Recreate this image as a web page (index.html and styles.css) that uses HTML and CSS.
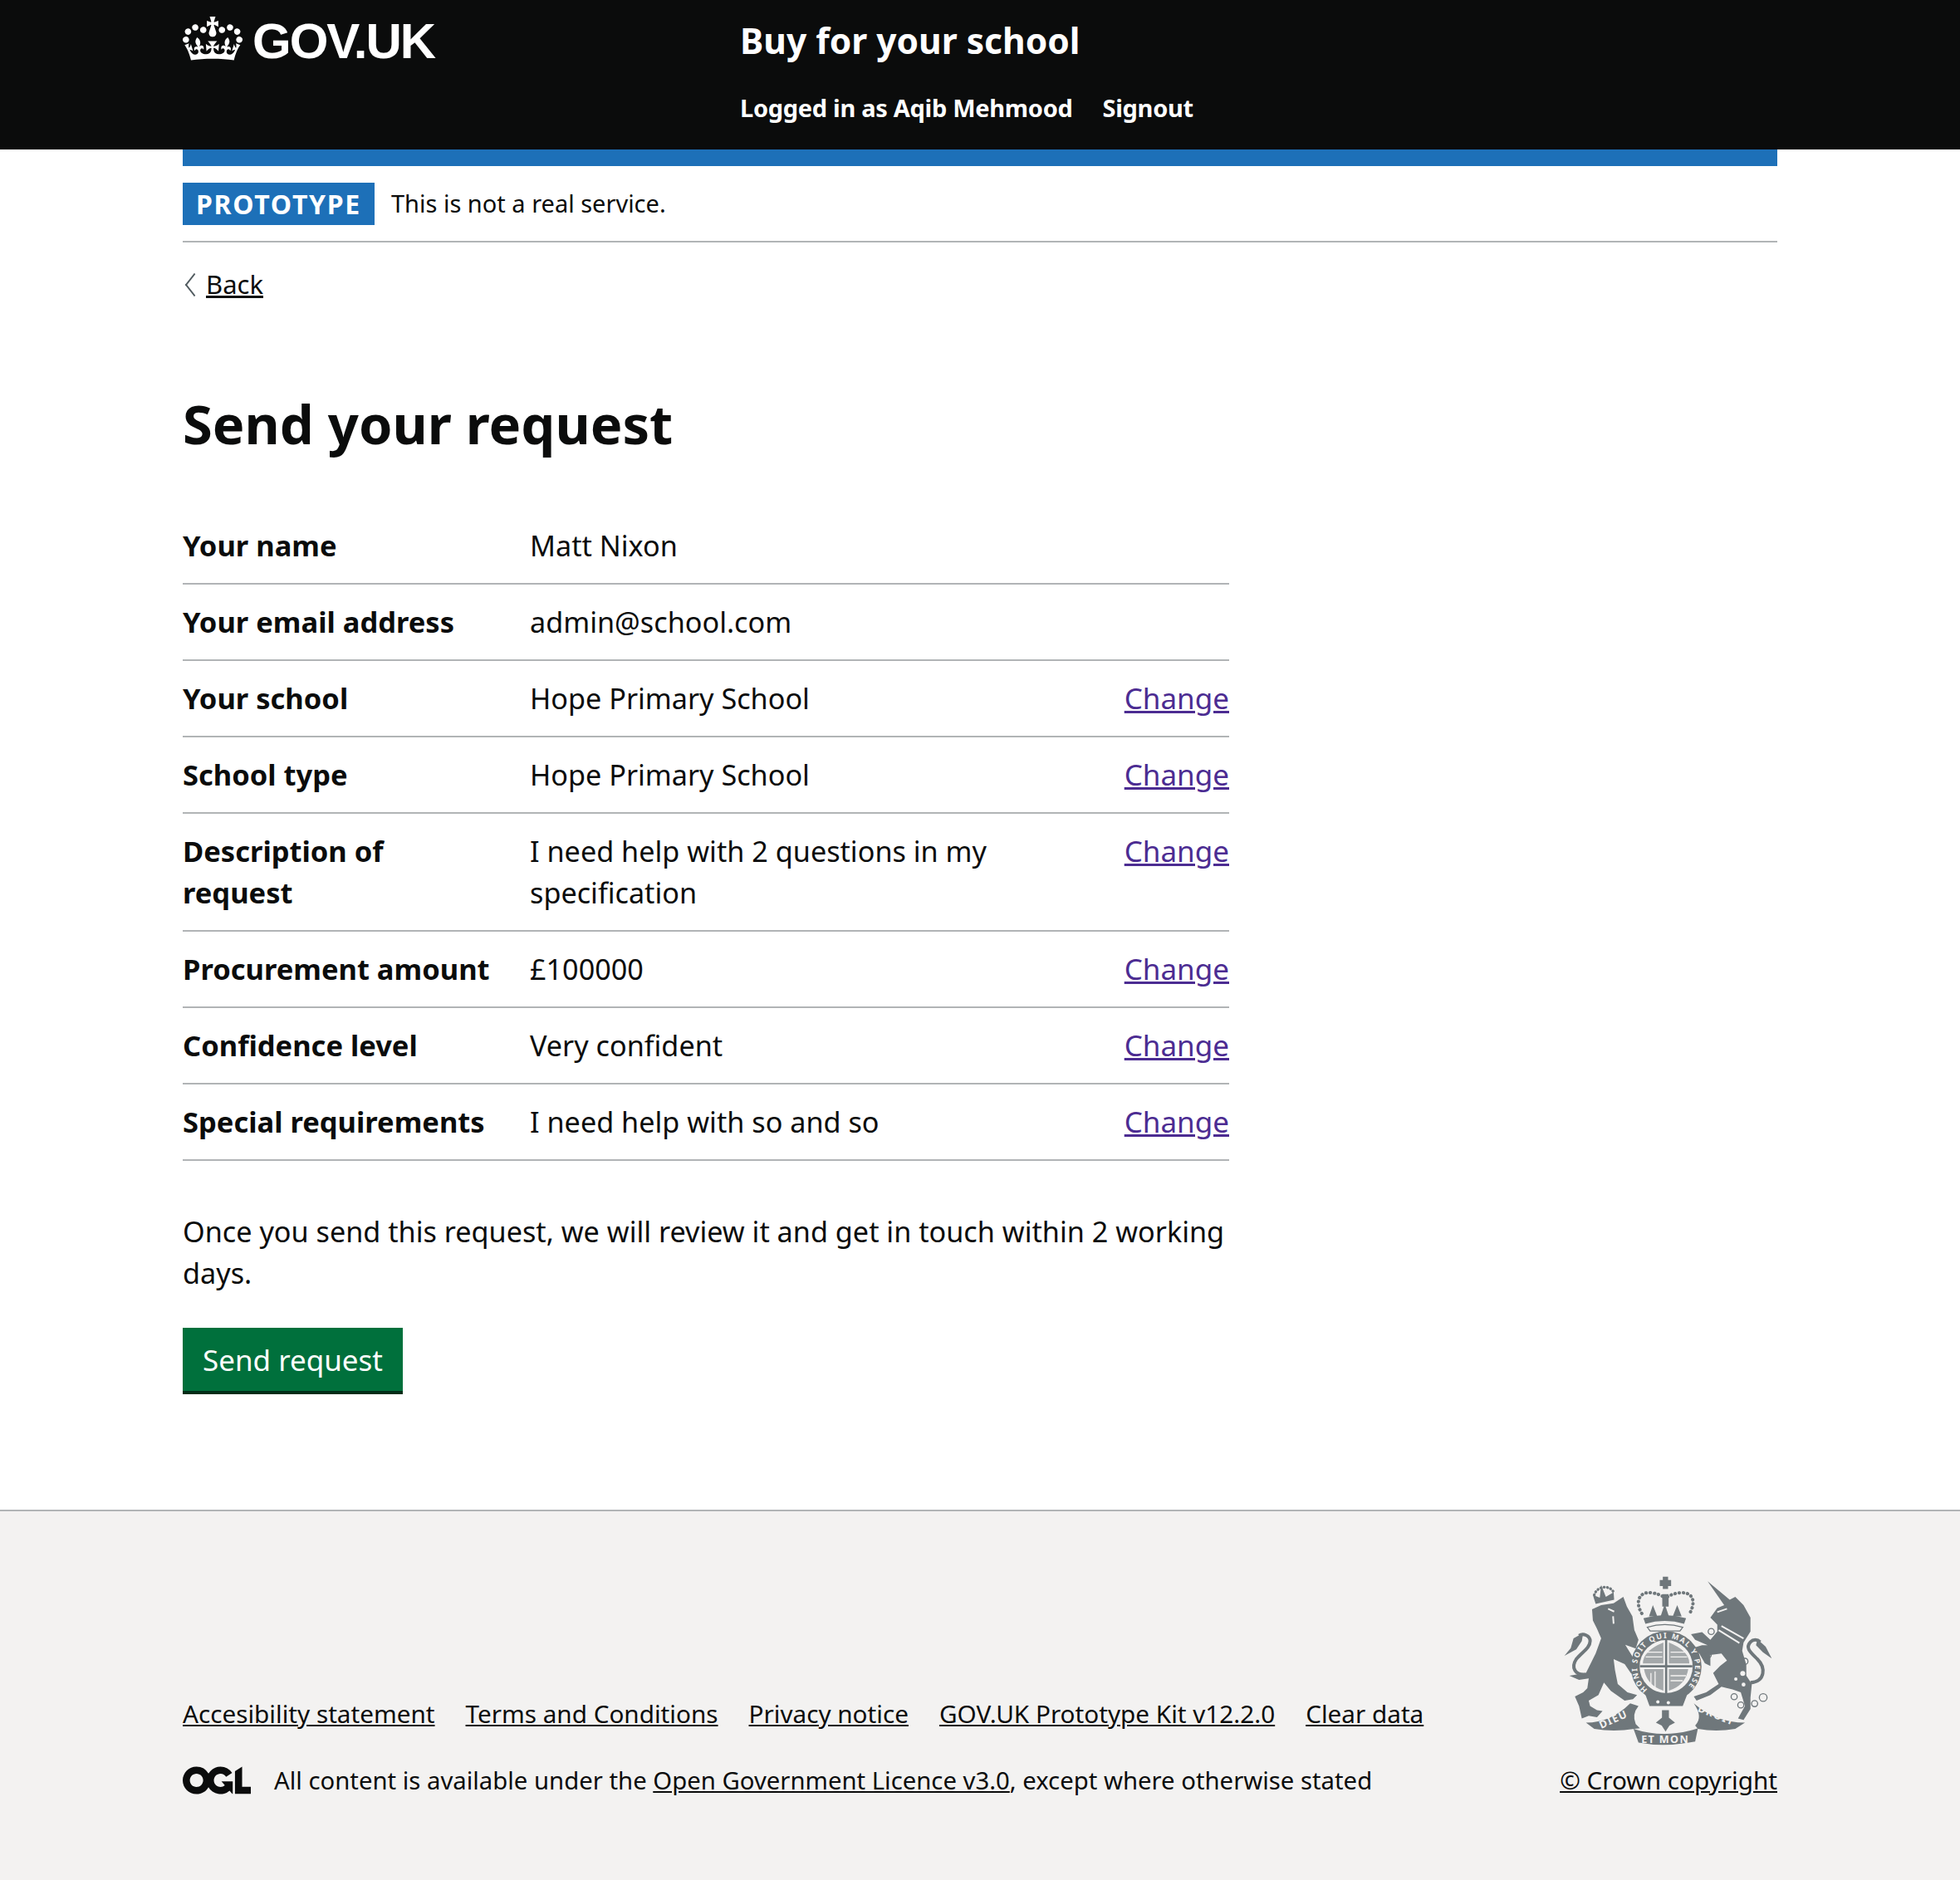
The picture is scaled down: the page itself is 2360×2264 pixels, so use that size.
FILE: index.html
```html
<!DOCTYPE html>
<html lang="en">
<head>
    <meta charset="UTF-8" />
    <title>Send your request - Buy for your school</title>
    <link rel="stylesheet" href="styles.css">
</head>
<body>
    <header class="site-header">
        <div class="site-header-inner">
            <a class="logo" href="#">
                <svg class="logo-crown" viewBox="0 0 132 97" width="72" height="53" aria-hidden="true"><path fill="currentColor" fill-rule="evenodd" d="M25 30.2c3.5 1.5 7.7-.2 9.1-3.7 1.5-3.6-.2-7.8-3.9-9.2-3.6-1.4-7.6.3-9.1 3.9-1.4 3.5.3 7.5 3.9 9zM9 39.5c3.6 1.5 7.8-.2 9.2-3.7 1.5-3.6-.2-7.8-3.9-9.1-3.6-1.5-7.6.2-9.1 3.8-1.4 3.5.3 7.5 3.8 9zM4.4 57.2c3.5 1.5 7.7-.2 9.1-3.8 1.5-3.6-.2-7.7-3.9-9.1-3.5-1.5-7.6.3-9.1 3.8-1.4 3.5.3 7.6 3.9 9.1zm38.3-21.4c3.5 1.5 7.7-.2 9.1-3.8 1.5-3.6-.2-7.7-3.9-9.1-3.6-1.5-7.6.3-9.1 3.8-1.3 3.6.4 7.7 3.9 9.1zm64.4-5.6c-3.6 1.5-7.8-.2-9.1-3.7-1.5-3.6.2-7.8 3.8-9.2 3.6-1.4 7.7.3 9.2 3.9 1.3 3.5-.4 7.5-3.9 9zm15.9 9.3c-3.6 1.5-7.7-.2-9.1-3.7-1.5-3.6.2-7.8 3.7-9.1 3.6-1.5 7.7.2 9.2 3.8 1.5 3.5-.3 7.5-3.8 9zm4.7 17.7c-3.6 1.5-7.8-.2-9.2-3.8-1.5-3.6.2-7.7 3.9-9.1 3.6-1.5 7.7.3 9.2 3.8 1.3 3.5-.4 7.6-3.9 9.1zM89.3 35.8c-3.6 1.5-7.8-.2-9.2-3.8-1.4-3.6.2-7.7 3.9-9.1 3.6-1.5 7.7.3 9.2 3.8 1.4 3.6-.3 7.7-3.9 9.1zM69.7 17.7l8.9 4.7V9.3l-8.9 2.8c-.2-.3-.5-.6-.9-.9L72.4 0H59.6l3.5 11.2c-.3.3-.6.5-.9.9l-8.8-2.8v13.1l8.8-4.7c.3.3.6.7.9.9l-5 15.4v.1c-.2.8-.4 1.6-.4 2.4 0 4.1 3.1 7.5 7 8.1h.2c.3 0 .7.1 1 .1.4 0 .7 0 1-.1h.2c4-.6 7.1-4.1 7.1-8.1 0-.8-.1-1.7-.4-2.4V34l-5.1-15.4c.4-.2.7-.6 1-.9zM66 92.8c16.9 0 32.8 1.1 47.1 3.2 4-16.9 8.9-26.7 14-33.5l-9.6-3.4c1 4.9 1.1 7.2 0 10.2-1.5-1.4-3-4.3-4.2-8.7L108.6 76c2.8-2 5-3.2 7.5-3.3-4.4 9.4-10 11.9-13.6 11.2-4.3-.8-6.3-4.6-5.6-7.9 1-4.7 5.7-5.9 8-.5 4.3-8.7-3-11.4-7.6-8.8 7.1-7.2 7.9-13.5 2.1-21.1-8 6.1-8.1 12.3-4.5 20.8-4.7-5.4-12.1-2.5-9.5 6.2 3.4-5.2 7.9-2 7.2 3.1-.6 4.3-6.4 7.8-13.5 7.2-10.3-.9-10.9-8-11.2-13.8 2.5-.5 7.1 1.8 11 7.3L80.2 60c-4.1 4.4-8 5.3-12.3 5.4 1.4-4.4 8-11.6 8-11.6H55.5s6.4 7.2 7.9 11.6c-4.2-.1-8-1-12.3-5.4l1.4 16.4c3.9-5.5 8.5-7.7 10.9-7.3-.3 5.8-.9 12.8-11.1 13.8-7.2.6-12.9-2.9-13.5-7.2-.7-5 3.8-8.3 7.1-3.1 2.7-8.7-4.6-11.6-9.4-6.2 3.7-8.5 3.6-14.7-4.6-20.8-5.8 7.6-5 13.9 2.2 21.1-4.7-2.6-11.9.1-7.7 8.8 2.3-5.5 7.1-4.2 8.1.5.7 3.3-1.3 7.1-5.7 7.9-3.5.7-9-1.8-13.5-11.2 2.5.1 4.7 1.3 7.5 3.3l-4.7-15.4c-1.2 4.4-2.7 7.2-4.3 8.7-1.1-3-.9-5.3 0-10.2l-9.5 3.4c5 6.9 9.9 16.7 14 33.5 14.8-2.1 30.8-3.2 47.7-3.2z"/></svg>
                <span class="logo-text">GOV.UK</span>
            </a>
            <div class="service">
                <a class="service-name" href="#">Buy for your school</a>
                <nav class="service-nav">
                    <a href="#">Logged in as Aqib Mehmood</a>
                    <a href="#">Signout</a>
                </nav>
            </div>
        </div>
    </header>

    <div class="page-width">
        <div class="blue-bar"></div>
        <div class="phase-banner">
            <strong class="phase-tag">PROTOTYPE</strong>
            <span>This is not a real service.</span>
        </div>
        <a class="back-link" href="#">Back</a>

        <main class="content">
            <h1>Send your request</h1>

            <div class="summary">
                <div class="summary-row">
                    <div class="summary-key">Your name</div>
                    <div class="summary-value">Matt Nixon</div>
                    <div class="summary-action"></div>
                </div>
                <div class="summary-row">
                    <div class="summary-key">Your email address</div>
                    <div class="summary-value">admin@school.com</div>
                    <div class="summary-action"></div>
                </div>
                <div class="summary-row">
                    <div class="summary-key">Your school</div>
                    <div class="summary-value">Hope Primary School</div>
                    <div class="summary-action"><a href="#">Change</a></div>
                </div>
                <div class="summary-row">
                    <div class="summary-key">School type</div>
                    <div class="summary-value">Hope Primary School</div>
                    <div class="summary-action"><a href="#">Change</a></div>
                </div>
                <div class="summary-row">
                    <div class="summary-key">Description of request</div>
                    <div class="summary-value">I need help with 2 questions in my specification</div>
                    <div class="summary-action"><a href="#">Change</a></div>
                </div>
                <div class="summary-row">
                    <div class="summary-key">Procurement amount</div>
                    <div class="summary-value">£100000</div>
                    <div class="summary-action"><a href="#">Change</a></div>
                </div>
                <div class="summary-row">
                    <div class="summary-key">Confidence level</div>
                    <div class="summary-value">Very confident</div>
                    <div class="summary-action"><a href="#">Change</a></div>
                </div>
                <div class="summary-row">
                    <div class="summary-key">Special requirements</div>
                    <div class="summary-value">I need help with so and so</div>
                    <div class="summary-action"><a href="#">Change</a></div>
                </div>
            </div>

            <p class="send-note">Once you send this request, we will review it and get in touch within 2 working days.</p>
            <button class="send-button">Send request</button>
        </main>
    </div>

    <footer class="site-footer">
        <div class="footer-inner">
            <div class="footer-meta">
                <div class="footer-links">
                    <a href="#">Accesibility statement</a>
                    <a href="#">Terms and Conditions</a>
                    <a href="#">Privacy notice</a>
                    <a href="#">GOV.UK Prototype Kit v12.2.0</a>
                    <a href="#">Clear data</a>
                </div>
                <div class="licence">
                    <svg class="ogl" viewBox="0 0 483.2 195.7" width="82" height="34" aria-hidden="true"><path fill="currentColor" d="M421.5 142.8V.1l-50.7 32.3v161.1h112.4v-50.7zm-122.3-9.6A47.12 47.12 0 0 1 221 97.8c0-26 21.1-47.1 47.1-47.1 16.7 0 31.4 8.7 39.7 21.8l42.7-27.2A97.63 97.63 0 0 0 268.1 0c-36.5 0-68.3 20.1-85.1 49.7A98 98 0 0 0 97.8 0C43.9 0 0 43.9 0 97.8s43.9 97.8 97.8 97.8c36.5 0 68.3-20.1 85.1-49.7a97.76 97.76 0 0 0 149.6 25.4l19.4 22.2h3v-87.8h-80l24.3 27.5zM97.8 145c-26 0-47.1-21.1-47.1-47.1s21.1-47.1 47.1-47.1 47.2 21 47.2 47S123.8 145 97.8 145"/></svg>
                    <span>All content is available under the <a href="#">Open Government Licence v3.0</a>, except where otherwise stated</span>
                </div>
            </div>
            <div class="copyright">
                <svg class="crest" viewBox="70 60 760 612" width="253" height="204" aria-hidden="true">
                    <g class="crest-fill">
                        <!-- lion -->
                        <path d="M172 180 L205 165 L250 158 L285 135 L298 170 L318 205 L325 255 L340 290 L330 322 L292 308 L330 370 L345 395 L342 420 L312 410 L290 378 L250 360 L255 400 L265 450 L300 480 L335 490 L320 505 L290 510 L240 475 L215 445 L195 490 L160 510 L165 530 L190 545 L210 548 L190 570 L160 565 L135 575 L125 530 L110 495 L140 480 L155 465 L160 430 L125 435 L90 420 L120 415 L150 410 L185 340 L205 285 L190 250 L175 220 Z"/>
                        <path d="M140 265 L105 285 L95 320 L72 348 L115 325 L135 295 Z"/>
                        <!-- unicorn -->
                        <path d="M590 78 L670 145 L690 135 L720 165 L745 210 L745 260 L720 300 L715 330 L730 380 L730 420 L750 450 L745 500 L745 540 L720 580 L700 575 L725 530 L710 480 L680 470 L640 460 L600 490 L550 510 L540 495 L585 480 L630 450 L610 410 L635 385 L660 365 L640 340 L600 345 L600 385 L580 375 L560 340 L535 320 L570 310 L590 310 L545 290 L530 270 L570 262 L600 290 L625 260 L625 235 L600 210 L625 175 L650 165 Z"/>
                        <path d="M770 288 L800 315 L822 358 L790 335 L765 310 Z"/>
                        <!-- centre crown -->
                        <path d="M428 62 H447 V74 H458 V96 H447 V106 H428 V96 H417 V74 H428 Z"/>
                        <path d="M426 125 H449 V170 H426 Z"/>
                        <path d="M378 205 L392 165 L408 205 Z M420 205 L435 160 L450 205 Z M464 205 L480 165 L496 205 Z"/>
                        <path d="M358 212 Q435 190 512 212 L505 232 Q435 212 365 232 Z"/>
                        <!-- lion crown -->
                        <path d="M185 160 L175 128 L200 138 L205 92 L222 135 L250 118 L252 145 Z"/>
                        <!-- garter -->
                        <circle cx="440" cy="387" r="128"/>
                        <path d="M362 480 L400 505 L480 505 L520 478 L500 530 L380 530 Z"/>
                        <!-- fleur on the motto -->
                        <path d="M425 545 H450 V572 L472 590 L452 600 L438 622 L424 600 L403 590 L425 572 Z"/>
                        <!-- ribbons -->
                        <path d="M150 590 Q240 590 310 520 L340 530 Q315 560 330 595 L345 610 L325 612 Q250 625 180 612 Z"/>
                        <path d="M540 520 Q620 590 725 590 L690 612 Q620 625 555 612 L545 600 Q575 570 540 520 Z"/>
                        <path d="M322 612 Q435 650 555 610 L545 658 Q435 680 340 662 Z"/>
                    </g>
                    <g class="crest-line">
                        <path d="M150 415 C110 420 95 390 115 360 C135 335 165 320 165 295 C165 275 140 265 125 275"/>
                        <path d="M745 445 C800 440 800 390 770 360 C745 335 725 320 745 298 C755 288 770 288 780 298"/>
                        <path class="crest-pearls" d="M352 195 C325 150 345 115 385 120 C405 122 420 128 430 135 M445 135 C455 128 475 120 495 120 C535 118 550 150 525 195"/>
                        <path class="crest-pearls small" d="M180 128 C190 95 235 90 250 118"/>
                    </g>
                    <path class="crest-cut" d="M372 245 Q435 225 500 245 L490 258 H382 Z"/>
                    <path class="crest-cut thin" d="M640 240 L720 285 M630 255 L705 302 M230 178 L252 188 M248 205 L250 232 M625 190 L660 178"/>
                    <g class="crest-rings">
                        <circle cx="603" cy="260" r="11"/><circle cx="592" cy="345" r="11"/><circle cx="725" cy="368" r="11"/>
                        <circle cx="686" cy="496" r="11"/><circle cx="710" cy="526" r="11"/><circle cx="760" cy="521" r="11"/><circle cx="791" cy="499" r="14"/>
                    </g>
                    <g class="crest-bg">
                        <circle cx="717" cy="412" r="9"/><circle cx="692" cy="432" r="6"/><circle cx="720" cy="452" r="7"/>
                        <circle cx="440" cy="387" r="96"/>
                        <circle cx="410" cy="515" r="6"/><circle cx="448" cy="518" r="6"/>
                    </g>
                    <g class="crest-fill">
                        <path d="M436 291 H444 V483 H436 Z M345 382 H535 V390 H345 Z"/>
                        <path class="crest-quarter" d="M356 376 Q356 330 430 300 V376 Z M450 300 Q524 330 524 376 H450 Z M360 396 H430 V474 Q370 455 360 396 Z M450 396 H520 Q510 455 450 474 Z"/>
                    </g>
                    <path class="crest-cut thin narrow" d="M366 335 H426 M366 352 H426 M456 335 H516 M456 352 H516 M456 420 H512 M456 438 H500 M385 410 V455 M400 404 V462"/>
                    <defs>
                        <path id="garter-path" d="M373 470 A105 105 0 1 1 507 470"/>
                    </defs>
                    <text class="crest-text garter"><textPath href="#garter-path" textLength="495">HONI SOIT QUI MAL Y PENSE</textPath></text>
                    <text class="crest-text motto" x="205" y="612" transform="rotate(-24 205 612)">DIEU</text>
                    <text class="crest-text motto" x="350" y="662">ET MON</text>
                    <text class="crest-text motto" x="552" y="548" transform="rotate(22 552 548)">DROIT</text>
                </svg>
                <a href="#">© Crown copyright</a>
            </div>
        </div>
    </footer>
</body>
</html>
```

FILE: styles.css
```css
* {
    box-sizing: border-box;
}

html, body {
    margin: 0;
    padding: 0;
}

body {
    font-family: "Noto Sans", Arial, sans-serif;
    font-size: 34.2px;
    line-height: 50px;
    color: #0b0c0c;
    background: white;
}

a {
    color: inherit;
}

.page-width, .site-header-inner, .footer-inner {
    width: 1920px;
    margin: 0 auto;
}

/* header */
.site-header {
    background: #0b0c0c;
    color: white;
    height: 180px;
}

.site-header a {
    color: white;
    text-decoration: none;
}

.site-header-inner {
    display: flex;
}

.logo {
    width: 671px;
    display: flex;
    align-items: flex-start;
    padding-top: 20px;
    font-weight: bold;
}

.logo-crown {
    margin-right: 12px;
}

.logo-text {
    font-family: "Liberation Sans", Arial, sans-serif;
    font-size: 60px;
    line-height: 60px;
    letter-spacing: -2px;
}

.service-name {
    display: block;
    font-size: 42.5px;
    font-weight: bold;
    line-height: 60px;
    padding-top: 19px;
}

.service-nav {
    display: flex;
    gap: 36px;
    margin-top: 31px;
    font-size: 29px;
    font-weight: bold;
    line-height: 40px;
    letter-spacing: -0.3px;
}

/* phase banner */
.blue-bar {
    height: 20px;
    background: #1d70b8;
}

.phase-banner {
    display: flex;
    align-items: center;
    gap: 20px;
    height: 92px;
    border-bottom: 2px solid #b1b4b6;
    font-size: 29px;
}

.phase-tag {
    background: #1d70b8;
    color: white;
    padding: 0 16px;
    line-height: 51px;
    font-size: 32px;
    letter-spacing: 1.7px;
}

.back-link {
    display: inline-block;
    position: relative;
    margin-top: 30px;
    padding-left: 28px;
    font-size: 31px;
    line-height: 40px;
}

.back-link::before {
    content: "";
    position: absolute;
    left: 5px;
    top: 12px;
    width: 16px;
    height: 16px;
    border-left: 2px solid #505a5f;
    border-bottom: 2px solid #505a5f;
    transform: rotate(45deg) skew(7deg, 7deg);
}

/* main */
.content {
    width: 1260px;
}

h1 {
    font-size: 65px;
    line-height: 100px;
    margin: 94px 0 52px;
}

.summary-row {
    display: flex;
    border-bottom: 2px solid #b1b4b6;
    padding: 20px 0;
}

.summary-key {
    width: 418px;
    padding-right: 45px;
    font-size: 34.5px;
    font-weight: bold;
}

.summary-value {
    flex: 1;
    padding-right: 40px;
}

.summary-action {
    width: 200px;
    font-size: 35px;
    text-align: right;
}

.summary-action a {
    color: #4c2c92;
}

.send-note {
    margin: 60px 0 41px;
}

.send-button {
    display: block;
    height: 80px;
    padding: 0 24px 4px;
    background: #00703c;
    color: white;
    border: none;
    border-radius: 0;
    box-shadow: inset 0 -4px 0 #002d18;
    font-family: inherit;
    font-size: 35px;
    cursor: pointer;
}

/* footer */
.site-footer {
    margin-top: 139px;
    height: 446px;
    background: #f3f2f1;
    border-top: 2px solid #b1b4b6;
    padding-top: 78px;
    font-size: 29.7px;
    line-height: 40px;
}

.footer-inner {
    display: flex;
    justify-content: space-between;
    align-items: flex-end;
}

.footer-links {
    display: flex;
    gap: 37px;
    margin-bottom: 40px;
}

.licence {
    display: flex;
    align-items: center;
    gap: 28px;
    font-size: 29.3px;
}

.copyright {
    display: flex;
    flex-direction: column;
    align-items: flex-end;
    gap: 22px;
}

.crest {
    margin-right: 4px;
}

.crest-fill {
    fill: #6f777b;
}

.crest-bg {
    fill: #f3f2f1;
}

.crest-cut {
    fill: #f3f2f1;
    stroke: #6f777b;
    stroke-width: 4;
}

.crest-cut.thin {
    fill: none;
    stroke: #f3f2f1;
    stroke-width: 6;
}

.crest-cut.narrow {
    stroke-width: 4;
}

.crest-line {
    fill: none;
    stroke: #6f777b;
    stroke-width: 12;
}

.crest-pearls {
    stroke-width: 12;
    stroke-dasharray: 1 14;
    stroke-linecap: round;
}

.crest-pearls.small {
    stroke-width: 10;
    stroke-dasharray: 1 11;
}

.crest-rings {
    fill: none;
    stroke: #6f777b;
    stroke-width: 4;
}

.crest-quarter {
    opacity: 0.6;
}

.crest-text {
    fill: #f3f2f1;
    font-family: "Noto Sans", Arial, sans-serif;
    font-size: 38px;
    font-weight: bold;
}

.motto {
    letter-spacing: 4px;
}

.garter {
    font-size: 27px;
}
```
